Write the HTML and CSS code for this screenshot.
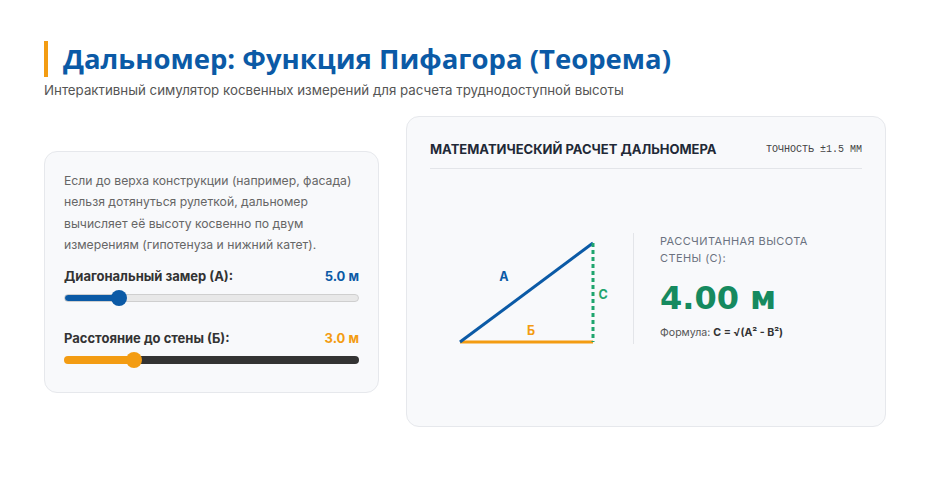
FILE: index.html
```html
<!DOCTYPE html>
<html lang="ru">
<head>
    <meta charset="UTF-8">
    <meta name="viewport" content="width=device-width, initial-scale=1.0">
    <title>Дальномер: Функция Пифагора</title>
    <link rel="stylesheet" href="styles.css">
</head>
<body>
    <div class="page">
        <!-- Page heading -->
        <header class="page-head">
            <h1 class="title">Дальномер: Функция Пифагора (Теорема)</h1>
            <p class="subtitle">Интерактивный симулятор косвенных измерений для расчета труднодоступной высоты</p>
        </header>

        <div class="layout">
            <!-- Controls: the two measurements -->
            <section class="card controls">
                <p class="intro">Если до верха конструкции (например, фасада) нельзя дотянуться рулеткой, дальномер вычисляет её высоту косвенно по двум измерениям (гипотенуза и нижний катет).</p>

                <div class="field">
                    <div class="field-row">
                        <label for="diag">Диагональный замер (А):</label>
                        <span class="value value-a" id="diag-value">5.0 м</span>
                    </div>
                    <input type="range" class="slider slider-a" id="diag" min="3" max="15" step="0.5" value="5" style="--fill: 16.7%">
                </div>

                <div class="field">
                    <div class="field-row">
                        <label for="dist">Расстояние до стены (Б):</label>
                        <span class="value value-b" id="dist-value">3.0 м</span>
                    </div>
                    <input type="range" class="slider slider-b" id="dist" min="1" max="10" step="0.5" value="3" style="--fill: 22.2%">
                </div>
            </section>

            <!-- Result panel -->
            <section class="card result">
                <div class="result-head">
                    <h2>Математический расчет дальномера</h2>
                    <span class="precision">ТОЧНОСТЬ ±1.5 ММ</span>
                </div>

                <div class="result-body">
                    <svg class="triangle" width="170" height="120" viewBox="0 0 170 120">
                        <line x1="10" y1="109" x2="143" y2="109" stroke="#f39c12" stroke-width="3"/>
                        <line x1="10" y1="109" x2="143" y2="10" stroke="#0b5aa6" stroke-width="3"/>
                        <line x1="143" y1="10" x2="143" y2="109" stroke="#1fa56e" stroke-width="3" stroke-dasharray="4 3"/>
                        <text x="54" y="48" class="tri-label" fill="#0b5aa6">А</text>
                        <text x="153" y="66" class="tri-label" fill="#1fa56e">С</text>
                        <text x="81" y="102" class="tri-label" fill="#f39c12">Б</text>
                    </svg>

                    <div class="answer">
                        <div class="answer-label">Рассчитанная высота стены (С):</div>
                        <div class="answer-value" id="height">4.00 м</div>
                        <div class="formula">Формула: <b>C = √(A² - B²)</b></div>
                    </div>
                </div>
            </section>
        </div>
    </div>

    <script>
        var diag = document.getElementById('diag');
        var dist = document.getElementById('dist');

        function fillOf(input) {
            return ((input.value - input.min) / (input.max - input.min) * 100).toFixed(1) + '%';
        }

        function update() {
            var a = parseFloat(diag.value);
            var b = parseFloat(dist.value);
            diag.style.setProperty('--fill', fillOf(diag));
            dist.style.setProperty('--fill', fillOf(dist));
            document.getElementById('diag-value').innerText = a.toFixed(1) + ' м';
            document.getElementById('dist-value').innerText = b.toFixed(1) + ' м';
            var c = a > b ? Math.sqrt(a * a - b * b) : 0;
            document.getElementById('height').innerText = c.toFixed(2) + ' м';
        }

        diag.addEventListener('input', update);
        dist.addEventListener('input', update);
    </script>
</body>
</html>
```

FILE: styles.css
```css
body {
    margin: 0;
    background: #fff;
    font-family: Inter, "Liberation Sans", sans-serif;
    color: #333;
}
.page {
    padding: 41px 44px 40px;
}
.title {
    margin: 0;
    padding-left: 15px;
    border-left: 4px solid #f39c12;
    font-family: "Open Sans", sans-serif;
    font-size: 27.5px;
    font-weight: 700;
    line-height: 36px;
    color: #0b5aa6;
}
.subtitle {
    margin: 5px 0 0;
    font-size: 13.3px;
    color: #555;
}
.layout {
    display: grid;
    grid-template-columns: 335px 480px;
    gap: 27px;
    align-items: center;
    margin-top: 18px;
}
.card {
    background: #f8f9fb;
    border: 1px solid #e6e8ec;
    border-radius: 13px;
    box-sizing: border-box;
}
.controls {
    padding: 18px 19px 24px;
}
.intro {
    margin: 0;
    font-size: 12.2px;
    line-height: 21.5px;
    color: #666;
}
.field {
    margin-top: 11px;
}
.field + .field {
    margin-top: 23px;
}
.field-row {
    display: flex;
    justify-content: space-between;
    font-size: 13px;
    font-weight: 700;
    line-height: 18px;
}
.field-row label {
    color: #333;
}
.value-a {
    color: #0b5aa6;
}
.value-b {
    color: #f39c12;
}
.slider {
    -webkit-appearance: none;
    appearance: none;
    display: block;
    width: 100%;
    height: 16px;
    margin: 5px 0 0;
    background: transparent;
}
.slider::-webkit-slider-runnable-track {
    height: 8px;
    border-radius: 4px;
    box-sizing: border-box;
}
.slider-a::-webkit-slider-runnable-track {
    background: linear-gradient(to right, #0b5aa6 var(--fill), #e8e8e8 var(--fill));
    border: 1px solid #cfcfcf;
}
.slider-b::-webkit-slider-runnable-track {
    background: linear-gradient(to right, #f39c12 var(--fill), #333 var(--fill));
}
.slider::-webkit-slider-thumb {
    -webkit-appearance: none;
    width: 16px;
    height: 16px;
    margin-top: -4px;
    border-radius: 50%;
    border: none;
}
.slider-a::-webkit-slider-thumb {
    background: #0b5aa6;
    margin-top: -5px;
}
.slider-b::-webkit-slider-thumb {
    background: #f39c12;
}
.result {
    display: flex;
    flex-direction: column;
    height: 311px;
    padding: 23px 23px 23px;
}
.result-head {
    display: flex;
    justify-content: space-between;
    align-items: center;
    padding-bottom: 10px;
    border-bottom: 1px solid #e3e5e9;
}
.result-head h2 {
    margin: 0;
    font-size: 13px;
    font-weight: 700;
    line-height: 18px;
    text-transform: uppercase;
    color: #1f2937;
}
.precision {
    font-family: "Liberation Mono", "DejaVu Sans Mono", monospace;
    font-size: 10px;
    color: #444;
}
.result-body {
    flex: 1;
    display: flex;
    align-items: flex-start;
    padding: 64px 0 0 20px;
}
.triangle {
    display: block;
    margin-right: 13px;
}
.tri-label {
    font-family: Inter, sans-serif;
    font-size: 12.5px;
    font-weight: 700;
    text-anchor: middle;
}
.answer {
    padding: 0 0 4px 26px;
    border-left: 1px solid #e3e5e9;
}
.answer-label {
    width: 170px;
    font-size: 11px;
    line-height: 17px;
    letter-spacing: 0.4px;
    text-transform: uppercase;
    color: #6b7280;
}
.answer-value {
    margin-top: 11px;
    font-family: "DejaVu Sans", sans-serif;
    font-size: 32px;
    font-weight: 700;
    line-height: 40px;
    color: #168a5f;
}
.formula {
    margin-top: 8px;
    font-size: 10.6px;
    line-height: 14px;
    color: #555;
}
.formula b {
    color: #333;
}
```
